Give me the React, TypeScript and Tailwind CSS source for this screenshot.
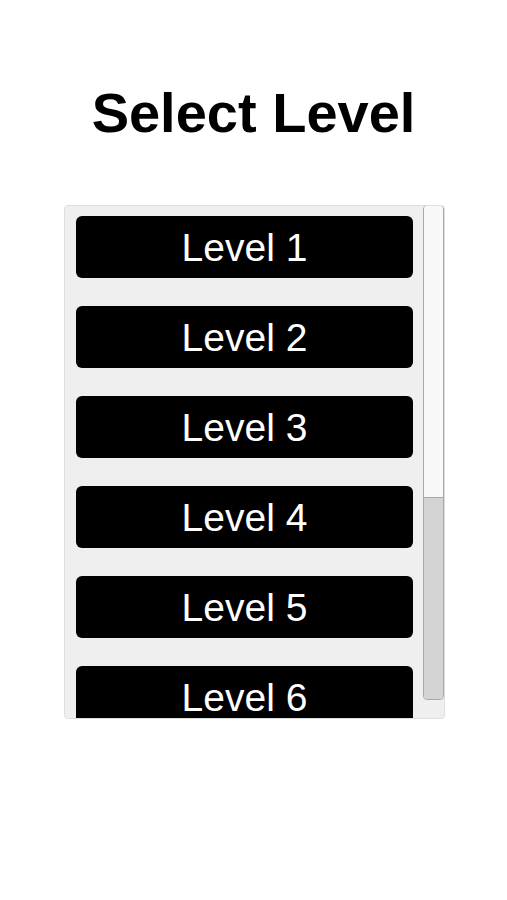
import React from 'react';

const LEVELS = [1, 2, 3, 4, 5, 6];

const LevelButton = ({ level }: { level: number }) => (
  <button
    type="button"
    className="h-[62px] w-full shrink-0 rounded-[6px] bg-black text-[39px] leading-none text-white"
  >
    Level {level}
  </button>
);

// fake scrollbar, light thumb on top, grey track below
const ScrollBar = () => (
  <div className="-mt-px flex h-[495px] w-[21px] shrink-0 flex-col overflow-hidden rounded-[4px] border border-[#a8a8a8]">
    <div className="h-[292px] border-b border-[#a8a8a8] bg-[#f8f8f8]" />
    <div className="flex-1 bg-[#d4d4d4]" />
  </div>
);

export default function App() {
  return (
    <div
      className="flex min-h-[900px] w-full flex-col bg-white"
      style={{ fontFamily: '"Liberation Sans", Arial, sans-serif' }}
    >
      <h1 className="mt-[85px] text-center text-[56px] font-bold leading-none text-black">
        Select Level
      </h1>

      {/* Level list */}
      <div className="ml-[64px] mt-[64px] flex h-[514px] w-[381px] gap-[10px] overflow-hidden rounded-[4px] border border-[#dedede] bg-[#efefef] pl-[11px]">
        <div className="flex flex-1 flex-col gap-[28px] overflow-hidden pt-[10px]">
          {LEVELS.map((level) => (
            <LevelButton key={level} level={level} />
          ))}
        </div>
        <ScrollBar />
      </div>
    </div>
  );
}
